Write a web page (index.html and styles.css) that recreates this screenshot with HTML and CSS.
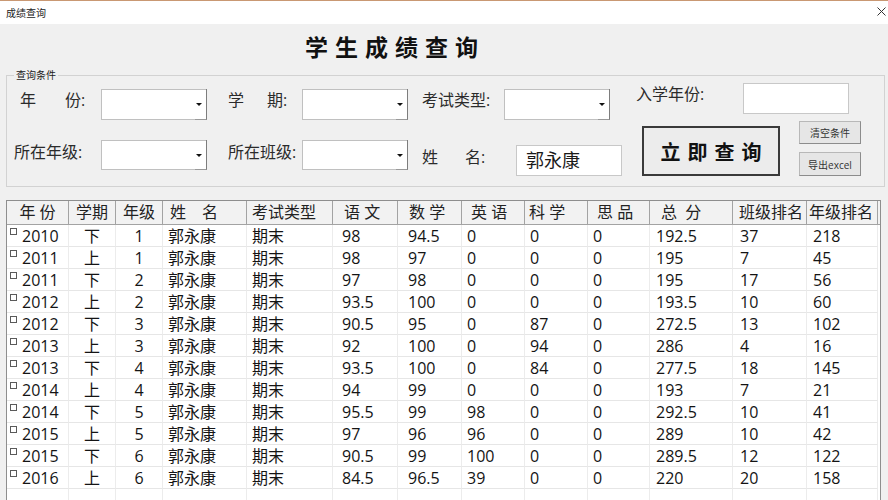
FILE: index.html
```html
<!DOCTYPE html>
<html lang="zh-CN">
<head>
<meta charset="utf-8">
<title>成绩查询</title>
<link rel="stylesheet" href="styles.css">
</head>
<body>
<div class="titlebar">
  <span class="title">成绩查询</span>
  <svg class="close" width="9" height="9" viewBox="0 0 9 9"><path d="M0.5 0.5L8.5 8.5M8.5 0.5L0.5 8.5" stroke="#333" stroke-width="1"/></svg>
</div>
<h1 class="heading">学生成绩查询</h1>
<fieldset class="group">
  <legend>查询条件</legend>
  <div class="frow r1">
    <label class="lbl l-year">年<span class="sp sp-year"></span>份:</label>
    <div class="combo"></div>
    <label class="lbl l-term">学<span class="sp sp-term"></span>期:</label>
    <div class="combo"></div>
    <label class="lbl l-type">考试类型:</label>
    <div class="combo"></div>
    <label class="lbl l-enroll">入学年份:</label>
    <div class="tbox t-enroll"></div>
  </div>
  <div class="frow r2">
    <label class="lbl l-grade">所在年级:</label>
    <div class="combo c2"></div>
    <label class="lbl l-class">所在班级:</label>
    <div class="combo c2"></div>
    <label class="lbl l-name">姓<span class="sp sp-name"></span>名:</label>
    <div class="tbox namebox">郭永康</div>
    <button class="go">立即查询</button>
    <div class="side">
      <button class="sbtn">清空条件</button>
      <button class="sbtn sbtn2">导出excel</button>
    </div>
  </div>
</fieldset>
<div class="grid">
  <div class="tr thead">
    <div class="th ctr">年 份</div><div class="th ctr">学期</div><div class="th ctr">年级</div><div class="th">姓　名</div><div class="th">考试类型</div><div class="th">语 文</div><div class="th">数 学</div><div class="th">英 语</div><div class="th">科 学</div><div class="th">思 品</div><div class="th">总  分</div><div class="th">班级排名</div><div class="th">年级排名</div>
  </div>
  <div class="tr"><div class="td"><i class="chk"></i>2010</div><div class="td">下</div><div class="td">1</div><div class="td">郭永康</div><div class="td">期末</div><div class="td">98</div><div class="td">94.5</div><div class="td">0</div><div class="td">0</div><div class="td">0</div><div class="td">192.5</div><div class="td">37</div><div class="td">218</div></div>
  <div class="tr"><div class="td"><i class="chk"></i>2011</div><div class="td">上</div><div class="td">1</div><div class="td">郭永康</div><div class="td">期末</div><div class="td">98</div><div class="td">97</div><div class="td">0</div><div class="td">0</div><div class="td">0</div><div class="td">195</div><div class="td">7</div><div class="td">45</div></div>
  <div class="tr"><div class="td"><i class="chk"></i>2011</div><div class="td">下</div><div class="td">2</div><div class="td">郭永康</div><div class="td">期末</div><div class="td">97</div><div class="td">98</div><div class="td">0</div><div class="td">0</div><div class="td">0</div><div class="td">195</div><div class="td">17</div><div class="td">56</div></div>
  <div class="tr"><div class="td"><i class="chk"></i>2012</div><div class="td">上</div><div class="td">2</div><div class="td">郭永康</div><div class="td">期末</div><div class="td">93.5</div><div class="td">100</div><div class="td">0</div><div class="td">0</div><div class="td">0</div><div class="td">193.5</div><div class="td">10</div><div class="td">60</div></div>
  <div class="tr"><div class="td"><i class="chk"></i>2012</div><div class="td">下</div><div class="td">3</div><div class="td">郭永康</div><div class="td">期末</div><div class="td">90.5</div><div class="td">95</div><div class="td">0</div><div class="td">87</div><div class="td">0</div><div class="td">272.5</div><div class="td">13</div><div class="td">102</div></div>
  <div class="tr"><div class="td"><i class="chk"></i>2013</div><div class="td">上</div><div class="td">3</div><div class="td">郭永康</div><div class="td">期末</div><div class="td">92</div><div class="td">100</div><div class="td">0</div><div class="td">94</div><div class="td">0</div><div class="td">286</div><div class="td">4</div><div class="td">16</div></div>
  <div class="tr"><div class="td"><i class="chk"></i>2013</div><div class="td">下</div><div class="td">4</div><div class="td">郭永康</div><div class="td">期末</div><div class="td">93.5</div><div class="td">100</div><div class="td">0</div><div class="td">84</div><div class="td">0</div><div class="td">277.5</div><div class="td">18</div><div class="td">145</div></div>
  <div class="tr"><div class="td"><i class="chk"></i>2014</div><div class="td">上</div><div class="td">4</div><div class="td">郭永康</div><div class="td">期末</div><div class="td">94</div><div class="td">99</div><div class="td">0</div><div class="td">0</div><div class="td">0</div><div class="td">193</div><div class="td">7</div><div class="td">21</div></div>
  <div class="tr"><div class="td"><i class="chk"></i>2014</div><div class="td">下</div><div class="td">5</div><div class="td">郭永康</div><div class="td">期末</div><div class="td">95.5</div><div class="td">99</div><div class="td">98</div><div class="td">0</div><div class="td">0</div><div class="td">292.5</div><div class="td">10</div><div class="td">41</div></div>
  <div class="tr"><div class="td"><i class="chk"></i>2015</div><div class="td">上</div><div class="td">5</div><div class="td">郭永康</div><div class="td">期末</div><div class="td">97</div><div class="td">96</div><div class="td">96</div><div class="td">0</div><div class="td">0</div><div class="td">289</div><div class="td">10</div><div class="td">42</div></div>
  <div class="tr"><div class="td"><i class="chk"></i>2015</div><div class="td">下</div><div class="td">6</div><div class="td">郭永康</div><div class="td">期末</div><div class="td">90.5</div><div class="td">99</div><div class="td">100</div><div class="td">0</div><div class="td">0</div><div class="td">289.5</div><div class="td">12</div><div class="td">122</div></div>
  <div class="tr"><div class="td"><i class="chk"></i>2016</div><div class="td">上</div><div class="td">6</div><div class="td">郭永康</div><div class="td">期末</div><div class="td">84.5</div><div class="td">96.5</div><div class="td">39</div><div class="td">0</div><div class="td">0</div><div class="td">220</div><div class="td">20</div><div class="td">158</div></div>
  <div class="tr"><div class="td"></div><div class="td"></div><div class="td"></div><div class="td"></div><div class="td"></div><div class="td"></div><div class="td"></div><div class="td"></div><div class="td"></div><div class="td"></div><div class="td"></div><div class="td"></div><div class="td"></div></div>
</div>
</body>
</html>
```
FILE: styles.css
```css
html, body {
  margin: 0;
  padding: 0;
}
body {
  width: 888px;
  height: 500px;
  overflow: hidden;
  background: #f0f0f0;
  color: #1a1a1a;
  font-family: "Open Sans", "Noto Sans CJK SC", sans-serif;
}

/* title bar */
.titlebar {
  height: 23px;
  border-top: 1px solid #c99873;
  background: #ffffff;
  display: flex;
  align-items: center;
  justify-content: space-between;
  padding: 0 2px 0 6px;
}
.title {
  font-size: 10px;
  line-height: 14px;
  color: #222;
  font-family: "Noto Sans CJK SC", sans-serif;
}
.close {
  display: block;
  margin-top: -2px;
}

/* heading */
.heading {
  margin: 0;
  height: 44px;
  line-height: 44px;
  padding-left: 305px;
  font-family: "Noto Sans CJK SC", sans-serif;
  font-size: 23px;
  font-weight: 700;
  letter-spacing: 7px;
  color: #111;
}

/* query group */
.group {
  margin: 0 3px 0 6px;
  padding: 0;
  min-width: 0;
  border: 1px solid #d2d2d2;
}
.group legend {
  font-family: "Noto Sans CJK SC", sans-serif;
  font-size: 10px;
  line-height: 14px;
  padding: 0 2px;
  margin-left: 7px;
  color: #222;
}
.frow {
  display: flex;
  align-items: flex-start;
}
.r1 { height: 39px; }
.r2 { height: 65px; }

.lbl {
  flex: none;
  font-size: 16px;
  line-height: 24px;
  height: 24px;
  white-space: nowrap;
  color: #2b2b2b;
}
.sp { display: inline-block; }
.sp-year { width: 29px; }
.sp-term { width: 23px; }
.sp-name { width: 27px; }

.r1 .lbl { margin-top: 6px; }
.l-year { margin-left: 13px; width: 81px; }
.l-term { margin-left: 21px; width: 74px; }
.l-type { margin-left: 14px; width: 82px; }
.r1 .l-enroll { margin-left: 26px; width: 107px; margin-top: 0; }

.r2 .lbl { margin-top: 19px; }
.l-grade { margin-left: 7px; width: 87px; }
.l-class { margin-left: 21px; width: 74px; }
.r2 .l-name { margin-left: 14px; width: 94px; margin-top: 24px; }

.combo {
  flex: none;
  position: relative;
  width: 106px;
  height: 31px;
  box-sizing: border-box;
  background: #fff;
  border: 1px solid #c0c0c0;
  margin-top: 7px;
}
.combo.c2 { margin-top: 19px; height: 30px; }
.combo::before {
  content: "";
  position: absolute;
  right: -1px;
  top: -1px;
  bottom: -1px;
  width: 12px;
  border-right: 1px solid #7d7d7d;
  border-bottom: 1px solid #9a9a9a;
  box-sizing: border-box;
}
.combo::after {
  content: "";
  position: absolute;
  right: 4px;
  top: 13px;
  border-left: 3px solid transparent;
  border-right: 3px solid transparent;
  border-top: 3px solid #111;
}

.tbox {
  flex: none;
  width: 106px;
  height: 31px;
  box-sizing: border-box;
  background: #fff;
  border: 1px solid #c8c8c8;
}
.t-enroll { margin-top: 1px; }
.namebox {
  margin-top: 24px;
  font-size: 18px;
  line-height: 29px;
  padding-left: 9px;
  color: #1a1a1a;
}

.go {
  flex: none;
  margin: 5px 0 0 20px;
  width: 138px;
  height: 50px;
  box-sizing: border-box;
  border: 2px solid #3a3a3a;
  background: #ececec;
  font-family: "Noto Sans CJK SC", sans-serif;
  font-size: 20px;
  font-weight: 700;
  letter-spacing: 7px;
  padding: 0 0 0 7px;
  color: #111;
  display: flex;
  align-items: center;
  justify-content: center;
}
.side {
  flex: none;
  margin-left: 19px;
  width: 62px;
  display: flex;
  flex-direction: column;
  gap: 8px;
}
.sbtn {
  height: 23px;
  box-sizing: border-box;
  padding: 0;
  background: #e6e6e6;
  border: 1px solid #b8b8b8;
  border-right-color: #8c8c8c;
  border-bottom-color: #8c8c8c;
  font-family: "Open Sans", "Noto Sans CJK SC", sans-serif;
  font-size: 10px;
  color: #333;
}
.sbtn2 { height: 24px; }

/* data grid */
.grid {
  margin: 13px 0 0 6px;
  width: 875px;
  height: 300px;
  box-sizing: border-box;
  border: 1px solid #8e8e8e;
  border-bottom: none;
  background: #fff;
  overflow: hidden;
}
.tr {
  display: grid;
  grid-template-columns: 62px 47px 47px 84px 86px 65px 64px 63px 63px 62px 83px 74px 71px;
}
.thead {
  background: #f2f2f2;
  border-bottom: 1px solid #a3a3a3;
}
.th {
  height: 23px;
  line-height: 23px;
  box-sizing: border-box;
  border-right: 1px solid #a3a3a3;
  font-size: 16px;
  white-space: pre;
  color: #222;
  overflow: hidden;
}
.th.ctr { text-align: center; }
.th:nth-child(4) { padding-left: 7px; }
.th:nth-child(5) { padding-left: 5px; }
.th:nth-child(6) { padding-left: 11px; }
.th:nth-child(7) { padding-left: 11px; }
.th:nth-child(8) { padding-left: 9px; }
.th:nth-child(9) { padding-left: 4px; }
.th:nth-child(10) { padding-left: 9px; }
.th:nth-child(11) { padding-left: 11px; }
.th:nth-child(12) { padding-left: 6px; }
.th:nth-child(13) { padding-left: 2px; }

.td {
  height: 22px;
  box-sizing: border-box;
  padding-top: 2px;
  line-height: 19px;
  border-right: 1px solid #ececec;
  border-bottom: 1px solid #e6e6e6;
  font-size: 16px;
  white-space: nowrap;
  overflow: hidden;
  color: #141414;
}
.td:nth-child(1) { padding-left: 3px; }
.td:nth-child(2), .td:nth-child(3) { text-align: center; }
.td:nth-child(4) { padding-left: 5px; }
.td:nth-child(5) { padding-left: 5px; }
.td:nth-child(6) { padding-left: 9px; }
.td:nth-child(7) { padding-left: 10px; }
.td:nth-child(8) { padding-left: 5px; }
.td:nth-child(9) { padding-left: 5px; }
.td:nth-child(10) { padding-left: 5px; }
.td:nth-child(11) { padding-left: 6px; }
.td:nth-child(12) { padding-left: 7px; }
.td:nth-child(13) { padding-left: 6px; }

.chk {
  display: inline-block;
  vertical-align: top;
  width: 7px;
  height: 7px;
  margin: 1px 5px 0 0;
  box-sizing: border-box;
  border: 1px solid #5a5a5a;
  background: #fff;
}
```
